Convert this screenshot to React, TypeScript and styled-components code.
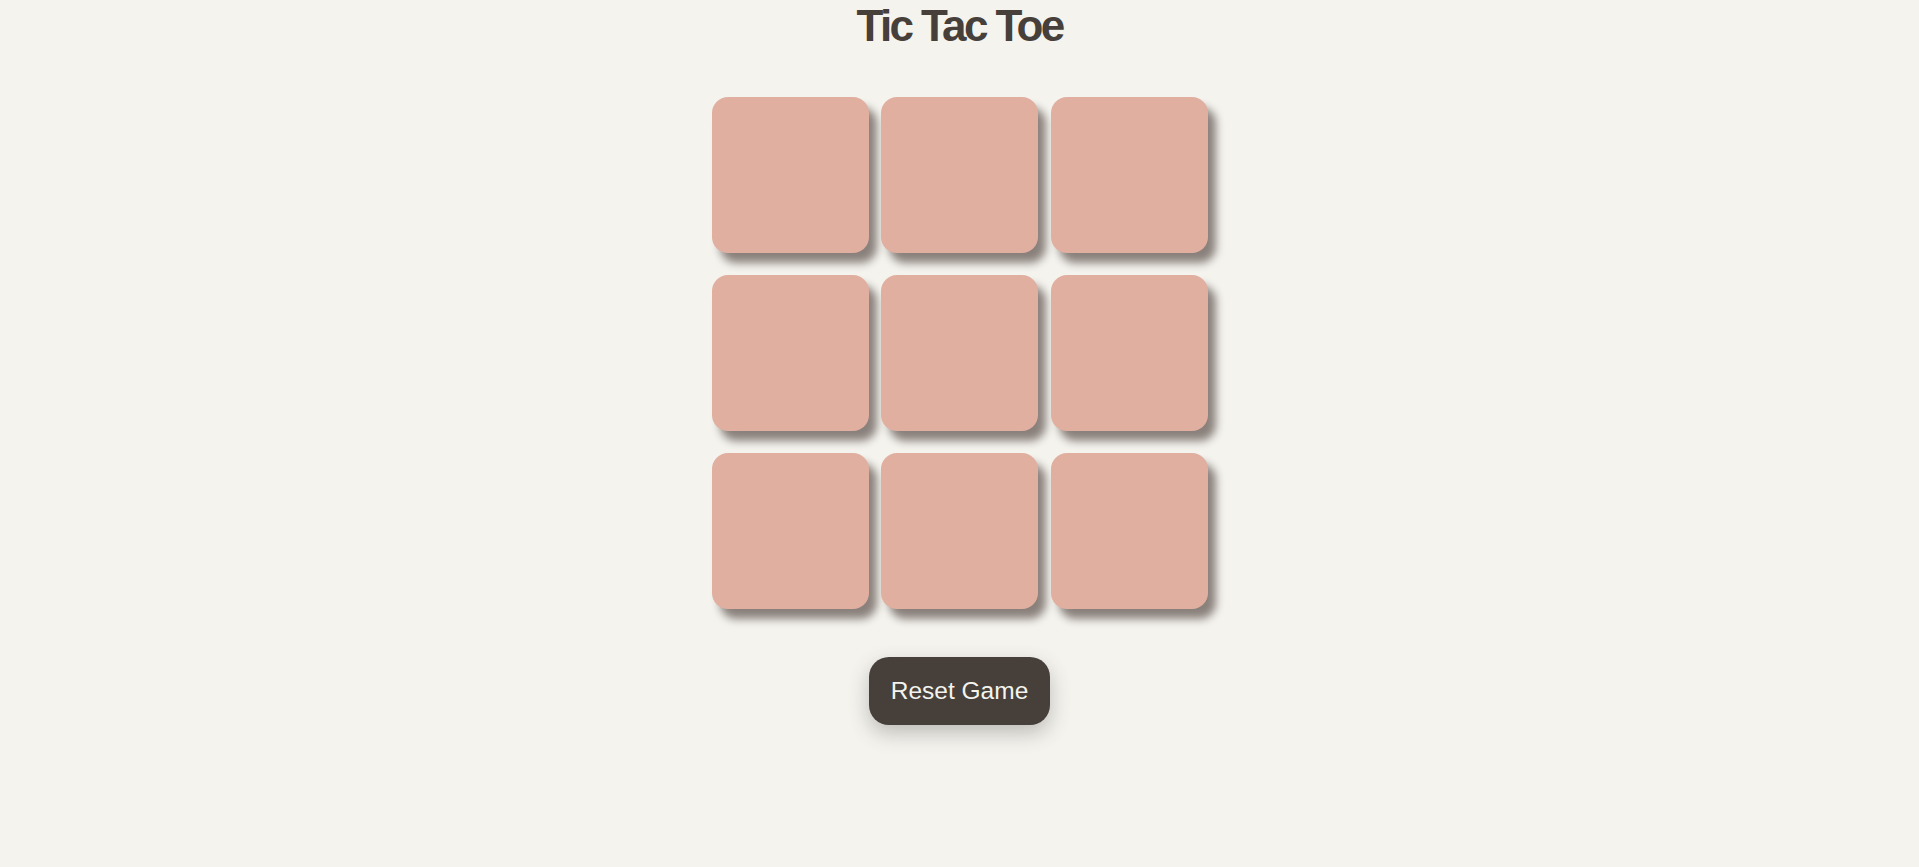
import React from "react";
import styled, { createGlobalStyle } from "styled-components";

const Global = createGlobalStyle`
  html, body {
    margin: 0;
    padding: 0;
    background: #f4f3ee;
    font-family: "Liberation Sans", Arial, sans-serif;
  }
`;

const Page = styled.main`
  display: flex;
  flex-direction: column;
  align-items: center;
  min-height: 100vh;
  box-sizing: border-box;
  background: #f4f3ee;
`;

const Title = styled.h1`
  margin: 1px 0 0;
  font-family: "Liberation Sans", Arial, sans-serif;
  font-size: 44px;
  font-weight: 700;
  letter-spacing: -2.6px;
  color: #463f3a;
  line-height: normal;
`;

const Board = styled.div`
  margin-top: 46px;
  display: grid;
  grid-template-columns: repeat(3, 157px);
  grid-auto-rows: 156px;
  column-gap: 12.5px;
  row-gap: 22px;
`;

const Cell = styled.button`
  border: none;
  padding: 0;
  border-radius: 16px;
  background: #e0afa0;
  box-shadow: 8px 10px 8px #8a817c;
  cursor: pointer;
  font-family: "Liberation Sans", Arial, sans-serif;
  font-size: 80px;
  font-weight: 700;
  color: #463f3a;
`;

const ResetButton = styled.button`
  margin-top: 48px;
  border: none;
  border-radius: 20px;
  padding: 20px 22px;
  background: #463f3a;
  color: #f4f3ee;
  font-family: "Liberation Sans", Arial, sans-serif;
  font-size: 24.5px;
  line-height: normal;
  box-shadow: 0 8px 20px rgba(70, 63, 58, 0.3);
  cursor: pointer;
`;

export default function App() {
  const [cells, setCells] = React.useState<(string | null)[]>(Array(9).fill(null));
  const [turn, setTurn] = React.useState<"X" | "O">("X");

  const play = (i: number) => {
    if (cells[i]) return;
    const next = cells.slice();
    next[i] = turn;
    setCells(next);
    setTurn(turn === "X" ? "O" : "X");
  };

  const reset = () => {
    setCells(Array(9).fill(null));
    setTurn("X");
  };

  return (
    <>
      <Global />
      <Page>
        <Title>Tic Tac Toe</Title>
        <Board>
          {cells.map((c, i) => (
            <Cell key={i} onClick={() => play(i)}>
              {c}
            </Cell>
          ))}
        </Board>
        <ResetButton onClick={reset}>Reset Game</ResetButton>
      </Page>
    </>
  );
}
